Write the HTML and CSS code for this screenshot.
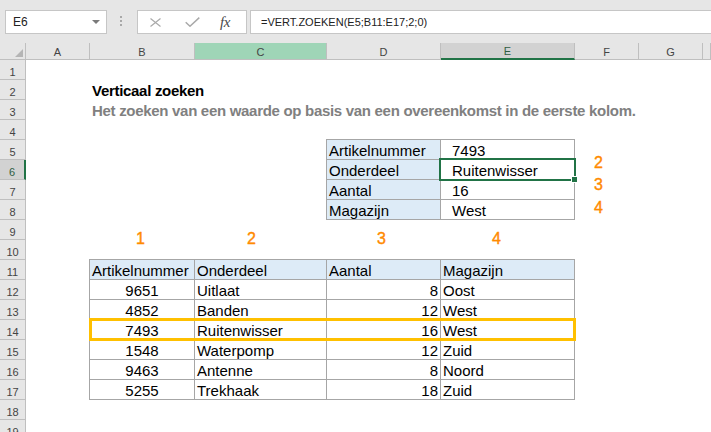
FILE: index.html
```html
<!DOCTYPE html>
<html lang="nl">
<head>
<meta charset="utf-8">
<title>Verticaal zoeken</title>
<link rel="stylesheet" href="styles.css">
</head>
<body>
<div class="fbar">
  <div class="namebox"><span>E6</span><span class="caret"></span></div>
  <div class="grip"><i></i><i></i><i></i></div>
  <div class="fxbox">
    <svg class="ic-x" width="11" height="9" viewBox="0 0 11 9"><path d="M0.5 0.5 L10.5 8.5 M10.5 0.5 L0.5 8.5" stroke="#a9a9a9" stroke-width="1.2" fill="none"/></svg>
    <svg class="ic-ok" width="15" height="10" viewBox="0 0 15 10"><path d="M0.7 5.2 L5 9.2 L14.3 0.6" stroke="#a9a9a9" stroke-width="1.5" fill="none"/></svg>
    <span class="fx">fx</span>
  </div>
  <div class="formula">=VERT.ZOEKEN(E5;B11:E17;2;0)</div>
</div>

<div class="sheet">
  <div class="corner"><span class="tri"></span></div>
  <div class="colhdrs">
    <div class="ch">A</div>
    <div class="ch">B</div>
    <div class="ch ch-hl">C</div>
    <div class="ch">D</div>
    <div class="ch ch-sel">E</div>
    <div class="ch">F</div>
    <div class="ch">G</div>
    <div class="ch"></div>
  </div>
  <div class="rowhdrs">
    <div class="rh">1</div>
    <div class="rh">2</div>
    <div class="rh">3</div>
    <div class="rh">4</div>
    <div class="rh">5</div>
    <div class="rh rh-sel">6</div>
    <div class="rh">7</div>
    <div class="rh">8</div>
    <div class="rh">9</div>
    <div class="rh">10</div>
    <div class="rh">11</div>
    <div class="rh">12</div>
    <div class="rh">13</div>
    <div class="rh">14</div>
    <div class="rh">15</div>
    <div class="rh">16</div>
    <div class="rh">17</div>
    <div class="rh">18</div>
    <div class="rh">19</div>
  </div>
  <div class="cells">
    <div class="title">Verticaal zoeken</div>
    <div class="subtitle">Het zoeken van een waarde op basis van een overeenkomst in de eerste kolom.</div>

    <div class="lookup">
      <div class="c hd">Artikelnummer</div><div class="c ind">7493</div>
      <div class="c hd">Onderdeel</div><div class="c ind">Ruitenwisser</div>
      <div class="c hd">Aantal</div><div class="c ind">16</div>
      <div class="c hd">Magazijn</div><div class="c ind">West</div>
      <div class="selbox"></div>
    </div>

    <div class="num n-f6">2</div>
    <div class="num n-f7">3</div>
    <div class="num n-f8">4</div>
    <div class="num n-b">1</div>
    <div class="num n-c">2</div>
    <div class="num n-d">3</div>
    <div class="num n-e">4</div>

    <div class="data">
      <div class="c hd">Artikelnummer</div><div class="c hd">Onderdeel</div><div class="c hd">Aantal</div><div class="c hd">Magazijn</div>
      <div class="c ctr">9651</div><div class="c">Uitlaat</div><div class="c r">8</div><div class="c">Oost</div>
      <div class="c ctr">4852</div><div class="c">Banden</div><div class="c r">12</div><div class="c">West</div>
      <div class="c ctr">7493</div><div class="c">Ruitenwisser</div><div class="c r">16</div><div class="c">West</div>
      <div class="c ctr">1548</div><div class="c">Waterpomp</div><div class="c r">12</div><div class="c">Zuid</div>
      <div class="c ctr">9463</div><div class="c">Antenne</div><div class="c r">8</div><div class="c">Noord</div>
      <div class="c ctr">5255</div><div class="c">Trekhaak</div><div class="c r">18</div><div class="c">Zuid</div>
      <div class="hilite"></div>
    </div>
  </div>
</div>
</body>
</html>
```

FILE: styles.css
```css
html, body {
  margin: 0;
  padding: 0;
}
body {
  width: 711px;
  height: 432px;
  overflow: hidden;
  background: #fff;
  font-family: "Liberation Sans", Arial, sans-serif;
  color: #000;
}

/* ---------- formula bar ---------- */
.fbar {
  display: flex;
  align-items: flex-start;
  height: 43px;
  box-sizing: border-box;
  padding: 10px 0 0 5px;
  background: #e6e6e6;
}
.namebox {
  width: 102px;
  height: 24px;
  box-sizing: border-box;
  background: #fff;
  border: 1px solid #c6c6c6;
  display: flex;
  align-items: center;
  justify-content: space-between;
  padding: 0 6px 0 7px;
  font-size: 12px;
  color: #222;
}
.caret {
  width: 0;
  height: 0;
  border-left: 4px solid transparent;
  border-right: 4px solid transparent;
  border-top: 4px solid #7a7a7a;
}
.grip {
  display: flex;
  flex-direction: column;
  gap: 2px;
  margin: 6px 15px 0 13px;
}
.grip i {
  display: block;
  width: 2px;
  height: 2px;
  background: #a8a8a8;
}
.fxbox {
  width: 110px;
  height: 24px;
  box-sizing: border-box;
  background: #fff;
  border: 1px solid #c6c6c6;
  display: flex;
  align-items: center;
}
.ic-x {
  margin-left: 12px;
}
.ic-ok {
  margin-left: 24px;
}
.fx {
  margin-left: 20px;
  font-family: "Liberation Serif", "Times New Roman", serif;
  font-style: italic;
  font-size: 15px;
  color: #4a4a4a;
  letter-spacing: -0.5px;
}
.formula {
  flex: 1;
  margin-left: 3px;
  height: 24px;
  box-sizing: border-box;
  background: #fff;
  border: 1px solid #c6c6c6;
  border-right: none;
  padding-left: 10px;
  font-size: 11px;
  line-height: 22px;
  color: #222;
  white-space: nowrap;
}

/* ---------- sheet ---------- */
.sheet {
  display: grid;
  grid-template-columns: 26px 1fr;
  grid-template-rows: 17px auto;
}
.corner {
  background: #e6e6e6;
  border-right: 1px solid #bfbfbf;
  border-bottom: 1px solid #bfbfbf;
  box-sizing: border-box;
  display: flex;
  justify-content: flex-end;
  align-items: flex-end;
  padding: 0 2px 2px 0;
}
.tri {
  width: 0;
  height: 0;
  border-left: 8px solid transparent;
  border-bottom: 8px solid #b5b5b5;
}
.colhdrs {
  display: grid;
  grid-template-columns: 64px 105px 132px 114px 134px 64px 64px 1fr;
  background: #e6e6e6;
}
.ch {
  box-sizing: border-box;
  border-right: 1px solid #bfbfbf;
  border-bottom: 1px solid #bfbfbf;
  text-align: center;
  font-size: 11px;
  line-height: 14px;
  padding-top: 2px;
  color: #444;
}
.ch-hl {
  background: #9fd5b7;
}
.ch-sel {
  background: #d2d2d2;
  border-bottom: 2px solid #217346;
  line-height: 13px;
  color: #2f5d43;
}
.rowhdrs {
  display: flex;
  flex-direction: column;
  background: #e6e6e6;
}
.rh {
  height: 20px;
  box-sizing: border-box;
  border-right: 1px solid #bfbfbf;
  border-bottom: 1px solid #bfbfbf;
  text-align: center;
  font-size: 11px;
  line-height: 13px;
  padding-top: 6px;
  color: #444;
}
.rh-sel {
  background: #d2d2d2;
  border-right: 2px solid #217346;
  color: #2f5d43;
}

.cells {
  display: grid;
  grid-template-columns: 64px 105px 132px 114px 134px 64px 64px 1fr;
  grid-template-rows: repeat(19, 20px);
}
.title,
.subtitle {
  grid-column: 2 / -1;
  font-size: 15px;
  font-weight: bold;
  white-space: nowrap;
  padding: 2px 0 0 2px;
  line-height: 17px;
  letter-spacing: -0.3px;
}
.title {
  grid-row: 2;
}
.subtitle {
  grid-row: 3;
  color: #808080;
}

/* tables */
.lookup,
.data {
  position: relative;
  display: grid;
  gap: 1px;
  padding: 1px;
  background: #a6a6a6;
  margin: -1px 0 0 -1px;
}
.lookup {
  grid-row: 5 / span 4;
  grid-column: 4 / span 2;
  grid-template-columns: 113px 133px;
  grid-template-rows: repeat(4, 19px);
}
.data {
  grid-row: 11 / span 7;
  grid-column: 2 / span 4;
  grid-template-columns: 104px 131px 113px 133px;
  grid-template-rows: repeat(7, 19px);
}
.c {
  background: #fff;
  font-size: 15px;
  line-height: 17px;
  padding: 2px 2px 0;
  white-space: nowrap;
  overflow: hidden;
}
.hd {
  background: #ddebf7;
}
.r {
  text-align: right;
}
.ctr {
  text-align: center;
}
.ind {
  padding-left: 11px;
}
/* overlays: absolutely positioned in a grid area, outside auto-placement */
.selbox {
  position: absolute;
  grid-row: 2 / 3;
  grid-column: 2 / 3;
  top: -2px;
  right: -2px;
  bottom: -2px;
  left: -2px;
  border: 2px solid #217346;
  z-index: 2;
}
.selbox::after {
  content: "";
  position: absolute;
  right: -3px;
  bottom: -3px;
  width: 5px;
  height: 5px;
  background: #217346;
  box-shadow: 0 0 0 1px #fff;
}
.hilite {
  position: absolute;
  grid-row: 4 / 5;
  grid-column: 1 / 5;
  top: -2px;
  right: -2px;
  bottom: -2px;
  left: -1px;
  border: 3px solid #ffc000;
  z-index: 2;
}

/* orange annotation digits */
.num {
  font-size: 16px;
  line-height: 16px;
  color: #ff8a00;
  text-align: center;
  align-self: start;
  -webkit-text-stroke: 0.4px #ff8a00;
}
.n-f6 { grid-row: 6; grid-column: 6; margin-top: -5px; padding-right: 17px; }
.n-f7 { grid-row: 7; grid-column: 6; margin-top: -3px; padding-right: 17px; }
.n-f8 { grid-row: 8; grid-column: 6; margin-top: 0; padding-right: 17px; }
.n-b { grid-row: 9; grid-column: 2; margin-top: 11px; padding-right: 4px; }
.n-c { grid-row: 9; grid-column: 3; margin-top: 11px; padding-right: 19px; }
.n-d { grid-row: 9; grid-column: 4; margin-top: 11px; padding-right: 5px; }
.n-e { grid-row: 9; grid-column: 5; margin-top: 11px; padding-right: 23px; }
```
